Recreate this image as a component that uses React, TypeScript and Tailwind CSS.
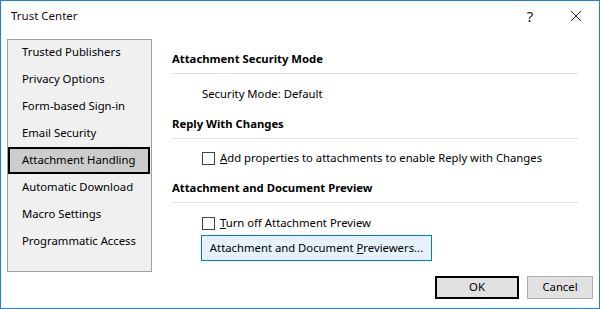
import React from 'react';

const navItems = [
  'Trusted Publishers',
  'Privacy Options',
  'Form-based Sign-in',
  'Email Security',
  'Attachment Handling',
  'Automatic Download',
  'Macro Settings',
  'Programmatic Access',
];

function Checkbox() {
  return <span className="block w-[13px] h-[13px] border border-[#444444] bg-white shrink-0" />;
}

function Section({ title }: { title: string }) {
  return (
    <div className="pr-[21px]">
      <div className="font-bold text-[11.3px] leading-[16px] h-[16px]">{title}</div>
      <div className="mt-[6px] h-px bg-[#e3e3e3]" />
    </div>
  );
}

export default function App() {
  return (
    <div
      className="w-[600px] h-[309px] bg-white border border-[#1883d7] flex flex-col text-[#000] text-[11.3px] overflow-hidden"
      style={{ fontFamily: '"Segoe UI", "Noto Sans", sans-serif' }}
    >
      {/* Title bar */}
      <div className="h-[31px] flex items-center pl-[10px] shrink-0">
        <span className="text-[11.5px] text-[#1a0a10] -mt-[1px]">Trust Center</span>
        <div className="ml-auto flex items-center h-full">
          <span className="w-[46px] text-center text-[15px] text-[#222]">?</span>
          <svg width="46" height="31" viewBox="0 0 46 31" className="block">
            <path d="M18 10 L28 20 M28 10 L18 20" stroke="#222" strokeWidth="1" />
          </svg>
        </div>
      </div>

      <div className="flex pl-[6px] pt-[7px]">
        {/* Left nav */}
        <div className="w-[145px] h-[233px] border border-[#a0a0a0] bg-[#f0f0f0] shrink-0">
          <div className="-mt-[1px]">
            {navItems.map((item) => (
              <div
                key={item}
                className={
                  item === 'Attachment Handling'
                    ? 'h-[27px] flex items-center pl-[12px] bg-[#cccccc] border-2 border-black mr-[1px]'
                    : 'h-[27px] flex items-center pl-[14px]'
                }
              >
                {item}
              </div>
            ))}
          </div>
        </div>

        {/* Right content */}
        <div className="flex-1 pl-[20px] pt-[12px]">
          <Section title="Attachment Security Mode" />
          <div className="pl-[30px] mt-[12px] h-[16px] leading-[16px]">Security Mode: Default</div>
          <div className="mt-[14px]">
            <Section title="Reply With Changes" />
          </div>
          <div className="pl-[30px] mt-[11px] flex items-center gap-[5px] h-[16px]">
            <Checkbox />
            <span>
              <span className="underline">A</span>dd properties to attachments to enable Reply with Changes
            </span>
          </div>
          <div className="mt-[14px]">
            <Section title="Attachment and Document Preview" />
          </div>
          <div className="pl-[30px] mt-[12px] flex items-center gap-[5px] h-[16px]">
            <Checkbox />
            <span>
              <span className="underline">T</span>urn off Attachment Preview
            </span>
          </div>
          <div className="pl-[29px] mt-[4px]">
            <button className="h-[26px] w-[231px] border border-[#0078d7] bg-[#e5f1fb] text-[11.3px]">
              Attachment and Document <span className="underline">P</span>reviewers...
            </button>
          </div>
        </div>
      </div>

      {/* Footer buttons */}
      <div className="flex justify-end gap-[8px] pr-[6px] mt-[4px]">
        <button className="w-[84px] h-[23px] border-2 border-black bg-[#e1e1e1] text-[11.3px]">OK</button>
        <button className="w-[66px] h-[23px] border border-[#adadad] bg-[#e1e1e1] text-[11.3px]">Cancel</button>
      </div>
    </div>
  );
}
